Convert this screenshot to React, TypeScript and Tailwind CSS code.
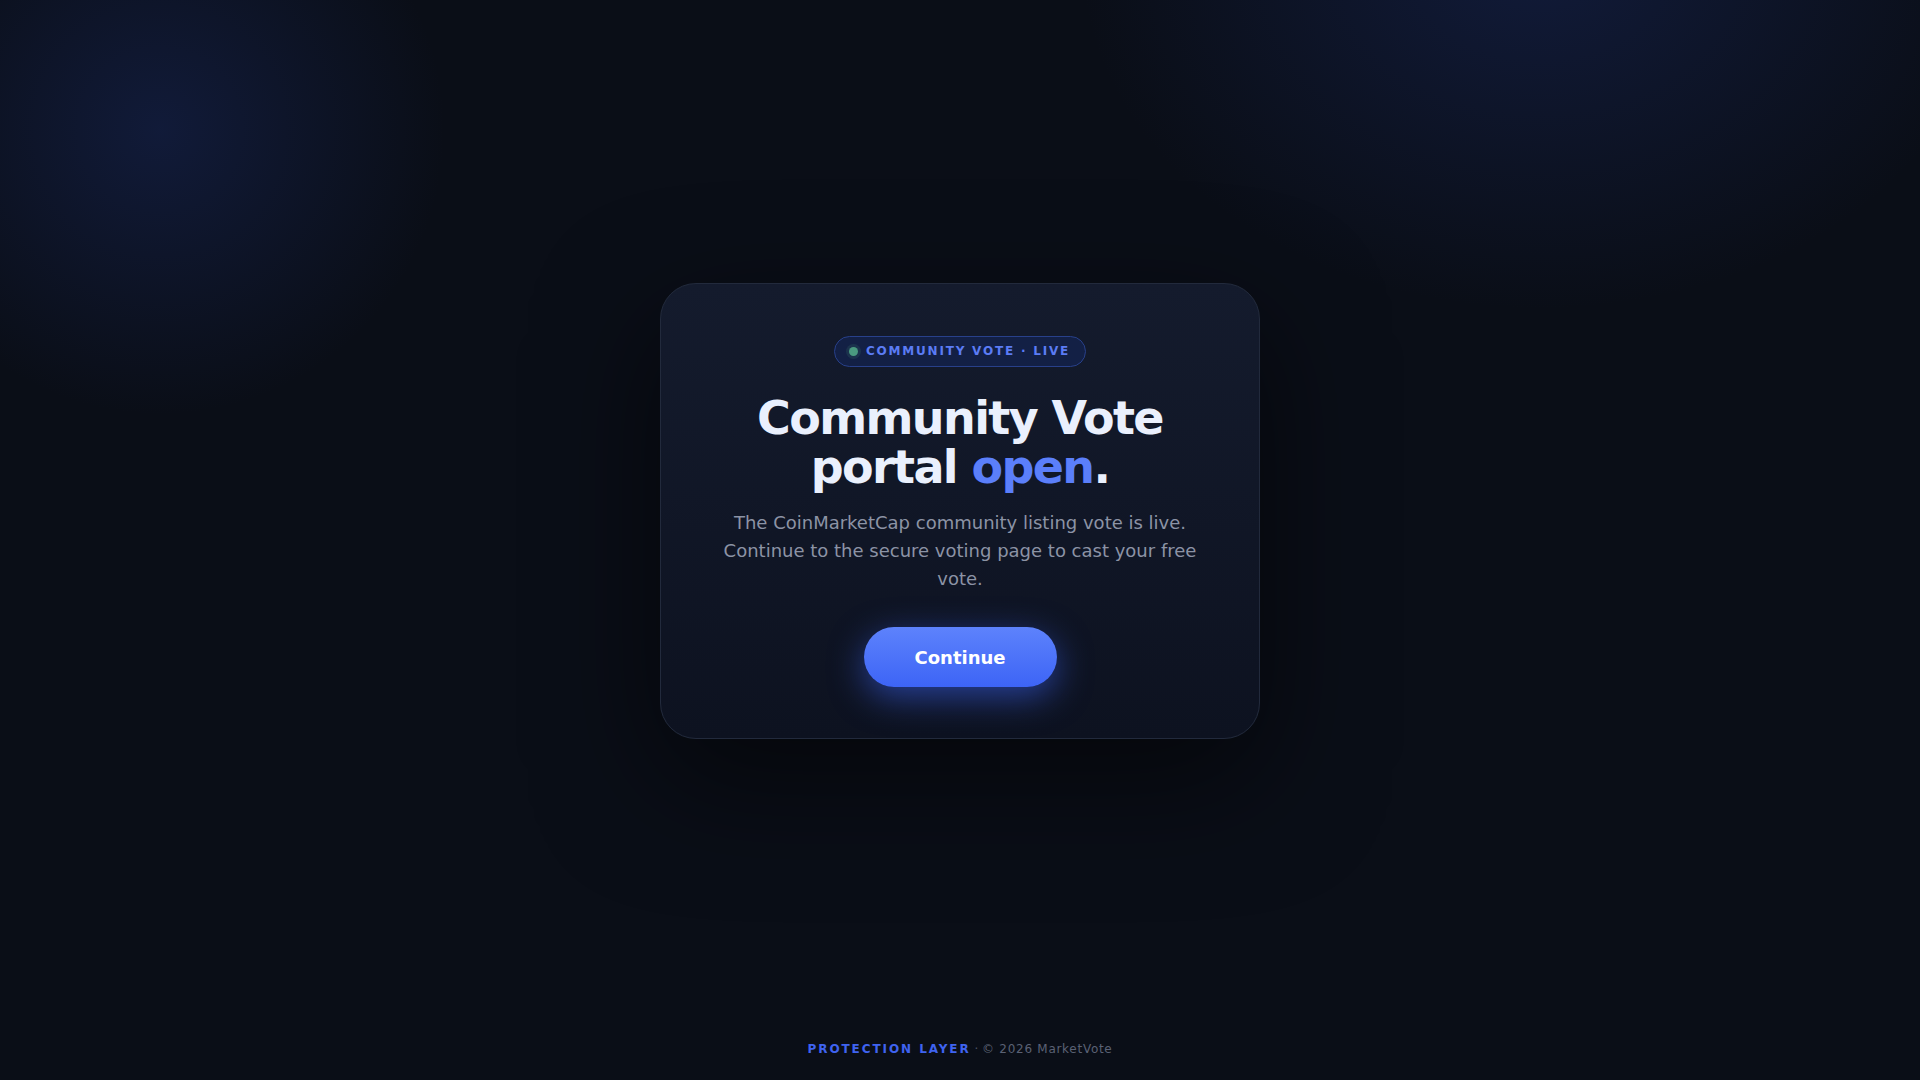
export default function App() {
  return (
    <div
      className="relative min-h-screen w-full overflow-hidden bg-[#0a0e17] flex flex-col text-white"
      style={{ fontFamily: '"DejaVu Sans", sans-serif' }}
    >
      {/* background glows */}
      <div className="pointer-events-none absolute -left-[150px] -top-[180px] h-[620px] w-[620px] rounded-full bg-[radial-gradient(circle,rgba(30,50,120,0.35)_0%,rgba(30,50,120,0)_65%)]" />
      <div className="pointer-events-none absolute -right-[120px] -top-[420px] h-[760px] w-[1000px] rounded-full bg-[radial-gradient(ellipse,rgba(30,50,120,0.35)_0%,rgba(30,50,120,0)_65%)]" />

      <main className="relative flex-1 flex items-center justify-center pb-[10px]">
        <div className="w-[600px] rounded-[36px] border border-[#222a3c] bg-[linear-gradient(180deg,#141b2d_0%,#0d1220_100%)] px-14 pt-[52px] pb-[51px] flex flex-col items-center text-center shadow-[0_40px_120px_rgba(0,0,0,0.55)]">
          <div className="flex items-center gap-[8px] rounded-full border border-[#28408a] bg-[#132045] pl-[14px] pr-[15px] h-[31px]">
            <span className="h-[9px] w-[9px] rounded-full bg-[#4a9a80] shadow-[0_0_0_3px_rgba(74,154,128,0.15)]" />
            <span className="text-[12px] font-bold tracking-[0.15em] text-[#5b7cf5]">
              COMMUNITY VOTE · LIVE
            </span>
          </div>

          <h1 className="mt-[27px] text-[46px] font-bold leading-[1.06] tracking-[-0.035em] text-[#eaf0fd]">
            Community Vote
            <br />
            portal <span className="text-[#5b7ffa]">open</span>.
          </h1>

          <p className="mt-[18px] text-[18px] leading-[28px] text-[#8c93a5]">
            The CoinMarketCap community listing vote is live. Continue to the secure voting page to cast your free
            vote.
          </p>

          <button className="mt-[34px] h-[60px] w-[193px] rounded-full bg-[linear-gradient(180deg,#5d82fc_0%,#3d64f6_100%)] text-[18px] font-bold text-white shadow-[0_10px_34px_rgba(61,100,246,0.55)]">
            Continue
          </button>
        </div>
      </main>

      <footer className="relative pb-[22px] pt-2 text-center text-[12px]">
        <span className="font-bold tracking-[0.16em] text-[#3f63f0]">PROTECTION LAYER</span>
        <span className="text-[#4d5466]"> · </span>
        <span className="tracking-[0.06em] text-[#5a6174]">© 2026 MarketVote</span>
      </footer>
    </div>
  )
}
